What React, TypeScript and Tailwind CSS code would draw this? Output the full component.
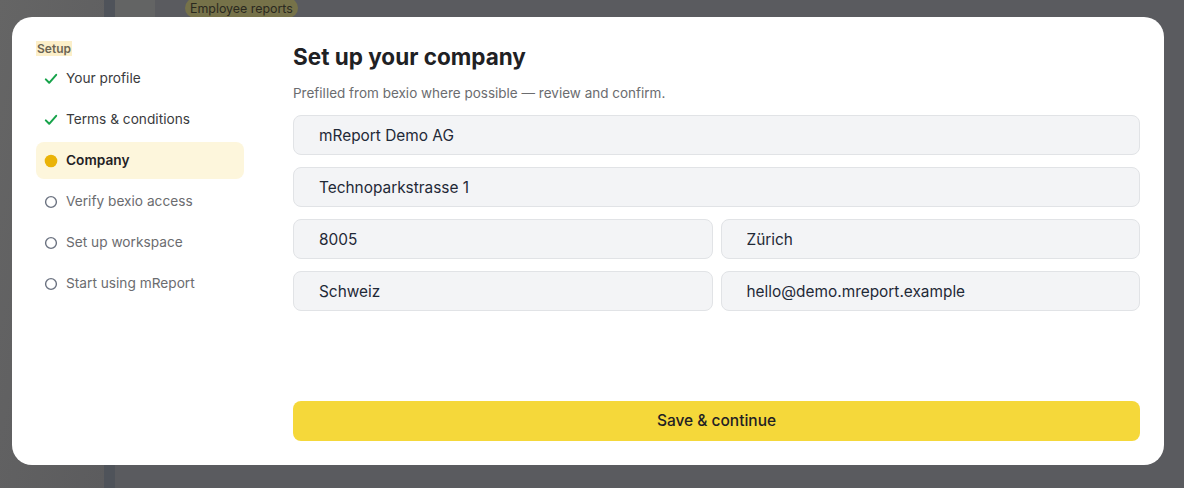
import React from "react";

const font = { fontFamily: "Inter, 'Noto Sans', sans-serif" };

function Check() {
  return (
    <svg width="14" height="14" viewBox="0 0 14 14" fill="none">
      <path d="M1.8 7.4 L5.2 10.8 L12.2 2.8" stroke="#16a34a" strokeWidth="2" strokeLinecap="round" strokeLinejoin="round" />
    </svg>
  );
}

function Hollow() {
  return (
    <svg width="14" height="14" viewBox="0 0 14 14" fill="none">
      <circle cx="7" cy="7" r="5.4" stroke="#6b7280" strokeWidth="1.4" />
    </svg>
  );
}

function Dot() {
  return (
    <svg width="14" height="14" viewBox="0 0 14 14">
      <circle cx="7" cy="7" r="6.3" fill="#eab308" />
    </svg>
  );
}

type Step = { label: string; state: "done" | "active" | "todo" };

const steps: Step[] = [
  { label: "Your profile", state: "done" },
  { label: "Terms & conditions", state: "done" },
  { label: "Company", state: "active" },
  { label: "Verify bexio access", state: "todo" },
  { label: "Set up workspace", state: "todo" },
  { label: "Start using mReport", state: "todo" },
];

function Field({ value }: { value: string }) {
  return (
    <input
      readOnly
      value={value}
      className="h-[40px] w-full rounded-lg border border-[#e1e3e6] bg-[#f3f4f6] pl-[25px] text-[15.4px] text-[#1f2937] outline-none"
      style={font}
    />
  );
}

export default function App() {
  return (
    <div className="relative h-[488px] w-[1184px] overflow-hidden bg-[#5a5b5f]" style={font}>
      {/* background app (dimmed) */}
      <div className="flex h-full w-full">
        <div className="h-full w-[104px] bg-gradient-to-br from-[#656565] to-[#5c5c5e]" />
        <div className="h-full w-[11px] bg-[#4f535a]" />
        <div className="w-[40px]">
          <div className="h-[24px] bg-[#636464]" />
        </div>
        <div className="flex-1">
          <div className="ml-[30px] mt-[-2px] w-fit rounded-full bg-[#767249] px-[5px] pt-[1px] text-[12.4px] leading-[19px] text-[#2a291f]">
            Employee reports
          </div>
        </div>
      </div>

      {/* overlay modal */}
      <div className="absolute inset-0 pl-[12px] pt-[17px]">
        <div className="flex h-[448px] w-[1152px] rounded-[20px] bg-white px-6 pb-6">
          <nav className="w-[208px] shrink-0 pt-6">
            <div className="w-fit bg-[#fcefc9] px-[1px] text-[12px] font-semibold leading-[15px] text-[#6b6554]">
              Setup
            </div>
            <ul className="mt-[4px] flex flex-col gap-[4px]">
              {steps.map((s) => (
                <li
                  key={s.label}
                  className={
                    s.state === "active"
                      ? "flex h-[37px] items-center gap-[8px] rounded-lg bg-[#fdf6dc] pl-2 text-[13.7px] font-semibold text-[#1f2124]"
                      : s.state === "done"
                      ? "flex h-[37px] items-center gap-[8px] pl-2 text-[13.7px] text-[#3a3b3d]"
                      : "flex h-[37px] items-center gap-[8px] pl-2 text-[13.7px] text-[#6b6c6f]"
                  }
                >
                  {s.state === "done" ? <Check /> : s.state === "active" ? <Dot /> : <Hollow />}
                  <span>{s.label}</span>
                </li>
              ))}
            </ul>
          </nav>

          <main className="ml-[49px] flex flex-1 flex-col pt-[26px]">
            <h1 className="text-[22.5px] font-bold leading-[28px] text-[#1f2124]">Set up your company</h1>
            <p className="mt-3 text-[13.5px] leading-[20px] text-[#6b6c6f]">
              Prefilled from bexio where possible — review and confirm.
            </p>
            <div className="mt-3 flex flex-col gap-3">
              <Field value="mReport Demo AG" />
              <Field value="Technoparkstrasse 1" />
              <div className="grid grid-cols-2 gap-2">
                <Field value="8005" />
                <Field value="Zürich" />
              </div>
              <div className="grid grid-cols-2 gap-2">
                <Field value="Schweiz" />
                <Field value="hello@demo.mreport.example" />
              </div>
            </div>
            <button
              className="mt-auto h-[40px] w-full rounded-lg bg-[#f5d83a] text-[15.5px] font-medium text-[#1f2124]"
              style={font}
            >
              Save &amp; continue
            </button>
          </main>
        </div>
      </div>
    </div>
  );
}
